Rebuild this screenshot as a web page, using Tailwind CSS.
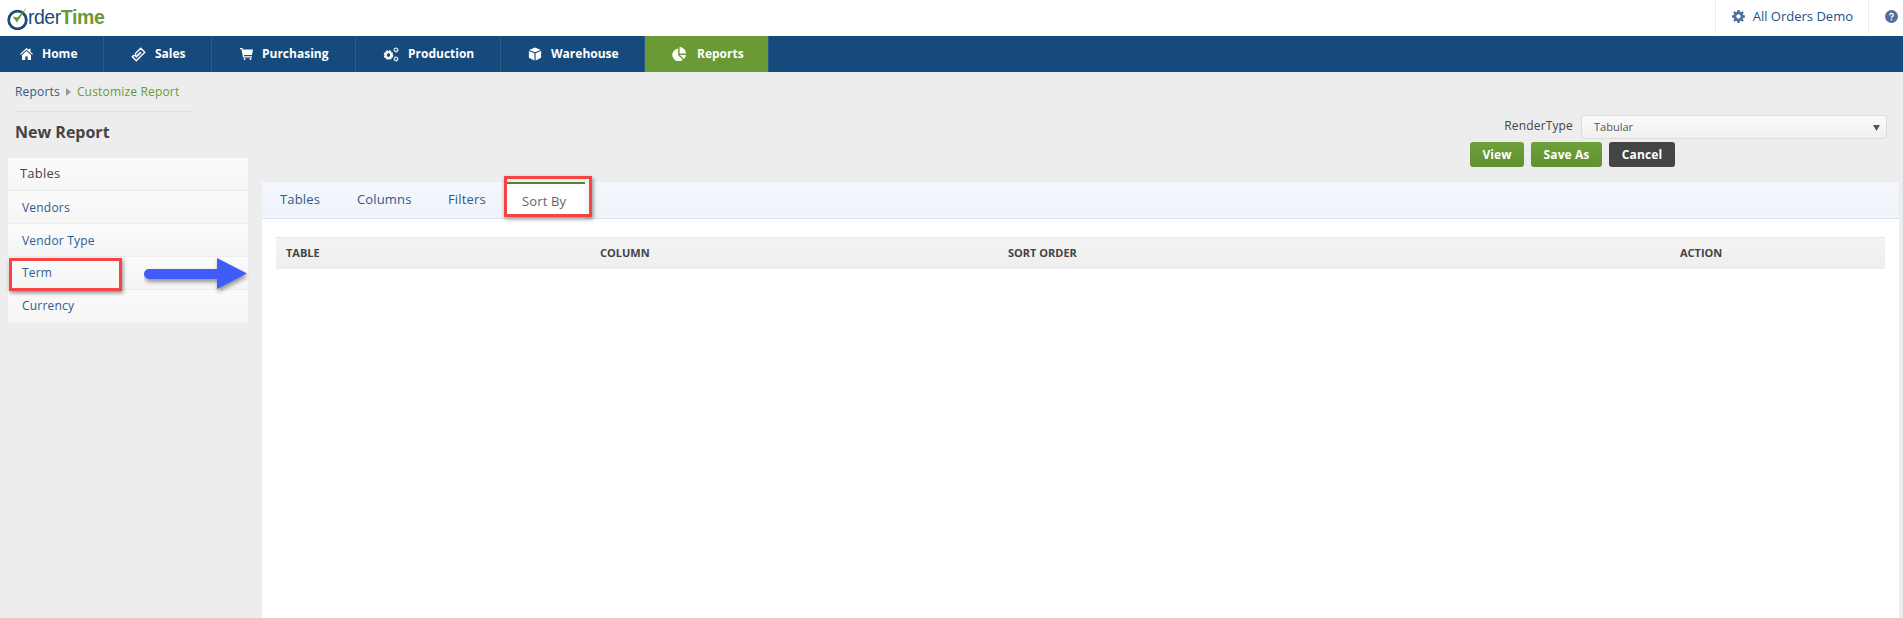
<!DOCTYPE html>
<html lang="en">
<head>
    <meta charset="UTF-8">
    <title>Customize Report</title>
    <script src="https://cdn.jsdelivr.net/npm/@tailwindcss/browser@4"></script>
</head>
<body class="bg-[#ededed] h-[618px] overflow-hidden font-['Open_Sans',sans-serif] text-[12px] text-[#2e5a8f]">
    <!-- top bar -->
    <header class="h-[36px] bg-white flex items-center justify-between">
        <div class="flex items-center pl-[7px] h-full">
            <svg class="w-[22px] h-[24px] -mt-[1px] shrink-0" viewBox="0 0 22 24">
                <circle cx="10.500" cy="14" r="8.800" fill="none" stroke="#1d4a7a" stroke-width="2.800"/>
                <path d="M5.500 10.500l4.500 6L20 1l-9.500 10.500z" fill="#6a9a35"/>
            </svg>
            <span class="text-[19.500px] leading-none -ml-[1px] tracking-[-0.5px] font-['Liberation_Sans',sans-serif] text-[#1d4a7a]">rder</span>
            <span class="text-[19.500px] leading-none font-bold tracking-[-0.3px] font-['Liberation_Sans',sans-serif] text-[#6a9a35]">Time</span>
        </div>
        <div class="flex items-center h-full">
            <div class="flex items-center gap-[8px] h-[33px] self-start pl-[16px] pr-[15px] border-l border-r border-[#ececec] text-[#24508a]">
                <svg class="w-[13px] h-[13px]" viewBox="0 0 24 24" fill="#52709f"><path fill-rule="evenodd" d="M10 0h4l.6 3.300 2 .8L19.400 2.200l2.400 2.400-1.900 2.800.8 2L24 10v4l-3.300.6-.8 2 1.900 2.800-2.400 2.400-2.800-1.900-2 .8L14 24h-4l-.6-3.300-2-.8-2.800 1.900-2.400-2.400 1.900-2.800-.8-2L0 14v-4l3.300-.6.8-2-1.900-2.800 2.400-2.400 2.800 1.900 2-.8zM12 8a4 4 0 1 0 0 8 4 4 0 0 0 0-8z"/></svg>
                <span class="text-[13px]">All Orders Demo</span>
            </div>
            <div class="w-[34px] flex items-center h-[33px] self-start pl-[16px]">
                <svg class="w-[13px] h-[13px]" viewBox="0 0 24 24"><circle cx="12" cy="12" r="12" fill="#52709f"/><path d="M7.500 9.500a4.500 4.500 0 0 1 9 0c0 2.800-3.200 2.800-3.200 5h-2.600c0-3.600 3.200-3.600 3.200-5a1.900 1.900 0 0 0-3.800 0zM10.700 16h2.600v3h-2.600z" fill="#fff"/></svg>
            </div>
        </div>
    </header>

    <!-- main nav -->
    <nav class="h-[36px] bg-[#174a7c] flex text-white font-bold text-[12px]">
        <a class="w-[104px] flex items-center pl-[20px] gap-[9px] border-r border-[#2d5c8b]">
            <svg class="w-[13px] h-[12px]" viewBox="0 0 26 24" fill="#fff"><path d="M13 0l4.500 4V1.500h3.500v6l5 4.500-1.500 1.600L13 3.500 1.500 13.600 0 12zM4 14l9-8 9 8v10h-6.500v-7h-5v7H4z"/></svg>
            Home
        </a>
        <a class="w-[108px] flex items-center pl-[27px] gap-[9px] border-r border-[#2d5c8b]">
            <svg class="w-[15px] h-[15px]" viewBox="0 0 24 24" fill="none" stroke="#fff" stroke-width="2.200"><path d="M15.500 2l6.500 6.500L8.500 22 2 15.500l2-2a2.200 2.200 0 0 0 3.100-3.100z"/><path d="M15 7l2 2-8.500 8.500-2-2z" fill="#fff" stroke="none"/></svg>
            Sales
        </a>
        <a class="w-[144px] flex items-center pl-[28px] gap-[9px] border-r border-[#2d5c8b]">
            <svg class="w-[13px] h-[12px]" viewBox="0 0 26 24" fill="#fff"><path d="M0 0h5l1 3h20l-2 11H8l.5 2.500H24V19H6L3 2.500H0z"/><circle cx="9" cy="22" r="2"/><circle cx="21" cy="22" r="2"/></svg>
            Purchasing
        </a>
        <a class="w-[145px] flex items-center pl-[27px] gap-[9px] border-r border-[#2d5c8b]">
            <svg class="w-[16px] h-[15px]" viewBox="0 0 32 30" fill="none" stroke="#fff"><circle cx="11" cy="16" r="6.500" stroke-width="6" stroke-dasharray="3.500 1.600"/><circle cx="11" cy="16" r="6" stroke-width="3.500"/><circle cx="26" cy="6" r="3.500" stroke-width="3" stroke-dasharray="2.200 .6"/><circle cx="26" cy="24" r="3.500" stroke-width="3" stroke-dasharray="2.200 .6"/></svg>
            Production
        </a>
        <a class="w-[144px] flex items-center pl-[27px] gap-[9px] border-r border-[#2d5c8b]">
            <svg class="w-[14px] h-[14px]" viewBox="0 0 24 24" fill="#fff"><path d="M12 1l10 4-10 4L2 5zM1.500 7l9.500 3.800V23L1.500 18.500zM22.500 7L13 10.800V23l9.500-4.500z"/></svg>
            Warehouse
        </a>
        <a class="w-[124px] flex items-center pl-[27px] gap-[11px] bg-[#699a36] border-r border-[#2d5c8b]">
            <svg class="w-[14px] h-[14px]" viewBox="0 0 24 24" fill="#fff"><path d="M10.500 2.500v11.500l8 8A11 11 0 1 1 10.500 2.500zM13 0a11 11 0 0 1 11 11H13zM13.500 13.500H24a11 11 0 0 1-3.500 7z"/></svg>
            Reports
        </a>
    </nav>

    <div class="flex">
        <!-- left column -->
        <aside class="w-[262px] shrink-0 pl-[8px]">
            <div class="w-[179px] ml-[7px] h-[40px] border-b border-[#e0e0e0] flex items-center gap-[6px] tracking-[0.18px] pt-[1px]">
                <span>Reports</span>
                <svg class="w-[5px] h-[8px]" viewBox="0 0 5 8" fill="#999"><path d="M0 0l5 4-5 4z"/></svg>
                <span class="text-[#699a36]">Customize Report</span>
            </div>
            <h1 class="ml-[7px] mt-[9px] text-[16px] leading-[22px] font-bold text-[#444]">New Report</h1>
            <div class="w-[240px] mt-[15px] bg-[#f8f8f8] relative font-medium tracking-[0.2px]">
                <div class="h-[33px] flex items-center pl-[12px] text-[13px] text-[#444] border-b-2 border-[#eeeeee] bg-linear-to-b from-[#fbfbfb] to-[#f6f6f6]">Tables</div>
                <div class="h-[33px] flex items-center pl-[14px] pt-[1px] border-b border-[#ececec] bg-linear-to-b from-[#fbfbfb] to-[#f5f5f5]">Vendors</div>
                <div class="h-[33px] flex items-center pl-[14px] pt-[1px] border-b border-[#ececec] bg-linear-to-b from-[#fbfbfb] to-[#f5f5f5]">Vendor Type</div>
                <div class="h-[33px] flex items-center pl-[14px] border-b border-[#ececec] bg-linear-to-b from-[#fbfbfb] to-[#f5f5f5]">Term</div>
                <div class="h-[33px] flex items-center pl-[14px] pb-[1px] bg-linear-to-b from-[#fbfbfb] to-[#f5f5f5]">Currency</div>
                <!-- annotation box + arrow -->
                <div class="absolute left-[1px] top-[100px] w-[113px] h-[33px] border-[3px] border-[#f44444] shadow-[1px_2px_4px_rgba(0,0,0,0.45)]"></div>
                <svg class="absolute left-[136px] top-[100px] w-[106px] h-[44px]" viewBox="0 0 106 44">
                    <path d="M5 11h68V0l30 15.500-30 15.500V21H5a5 5 0 0 1 0-10z" fill="#000" opacity="0.4" transform="translate(1 3)" style="filter:blur(2px)"/>
                    <path d="M5 11h68V0l30 15.500-30 15.500V21H5a5 5 0 0 1 0-10z" fill="#3f5cfb"/>
                </svg>
            </div>
        </aside>

        <!-- right column -->
        <main class="flex-1 pr-[4px]">
            <div class="h-[110px] flex flex-col items-end">
                <div class="mt-[43px] pr-[12px] flex items-center gap-[8px]">
                    <span class="text-[#444] text-[12px] tracking-[0.15px] -mt-[3px]">RenderType</span>
                    <div class="w-[306px] h-[24px] rounded-[3px] border border-[#dddddd] bg-linear-to-b from-[#fbfbfb] to-[#f0f0f0] flex items-center justify-between pl-[12px] pr-[6px] text-[11px] text-[#555]">
                        <span>Tabular</span>
                        <svg class="w-[7px] h-[7px]" viewBox="0 0 7 7" fill="#555"><path d="M0 1h7L3.500 7z"/></svg>
                    </div>
                </div>
                <div class="mt-[3px] mr-[224px] flex gap-[7px] font-bold text-white text-[12px] tracking-[0.1px]">
                    <button class="w-[54px] h-[25px] rounded-[3px] bg-linear-to-b from-[#6fa13b] to-[#60902f]">View</button>
                    <button class="w-[71px] h-[25px] rounded-[3px] bg-linear-to-b from-[#6fa13b] to-[#60902f]">Save As</button>
                    <button class="w-[66px] h-[25px] rounded-[3px] bg-[#444444]">Cancel</button>
                </div>
            </div>
            <section class="bg-white h-[436px]">
                <div class="h-[37px] bg-linear-to-b from-[#f4f7fb] to-[#eff3fa] border-b border-[#dde3ee] flex pl-[5px] text-[13px] font-medium tracking-[0.15px] relative">
                    <a class="w-[77px] shrink-0 flex items-center pl-[13px]">Tables</a>
                    <a class="w-[91px] shrink-0 flex items-center pl-[13px]">Columns</a>
                    <a class="w-[72px] shrink-0 flex items-center pl-[13px]">Filters</a>
                    <a class="w-[78px] shrink-0 h-[37px] bg-white border-t-2 border-[#55822d] flex items-center pl-[15px] text-[#666]">Sort By</a>
                    <div class="absolute left-[242px] -top-[6px] w-[88px] h-[41px] border-[3px] border-[#f44444] shadow-[1px_2px_4px_rgba(0,0,0,0.45)]"></div>
                </div>
                <div class="px-[14px] pt-[18px]">
                    <div class="h-[32px] bg-linear-to-b from-[#f4f4f4] to-[#eeeeee] border-t border-[#e8e8e8] grid grid-cols-[314px_408px_672px_1fr] pl-[10px] items-center text-[11px] font-bold text-[#444]">
                        <span>TABLE</span>
                        <span>COLUMN</span>
                        <span>SORT ORDER</span>
                        <span>ACTION</span>
                    </div>
                </div>
            </section>
        </main>
    </div>
</body>
</html>
